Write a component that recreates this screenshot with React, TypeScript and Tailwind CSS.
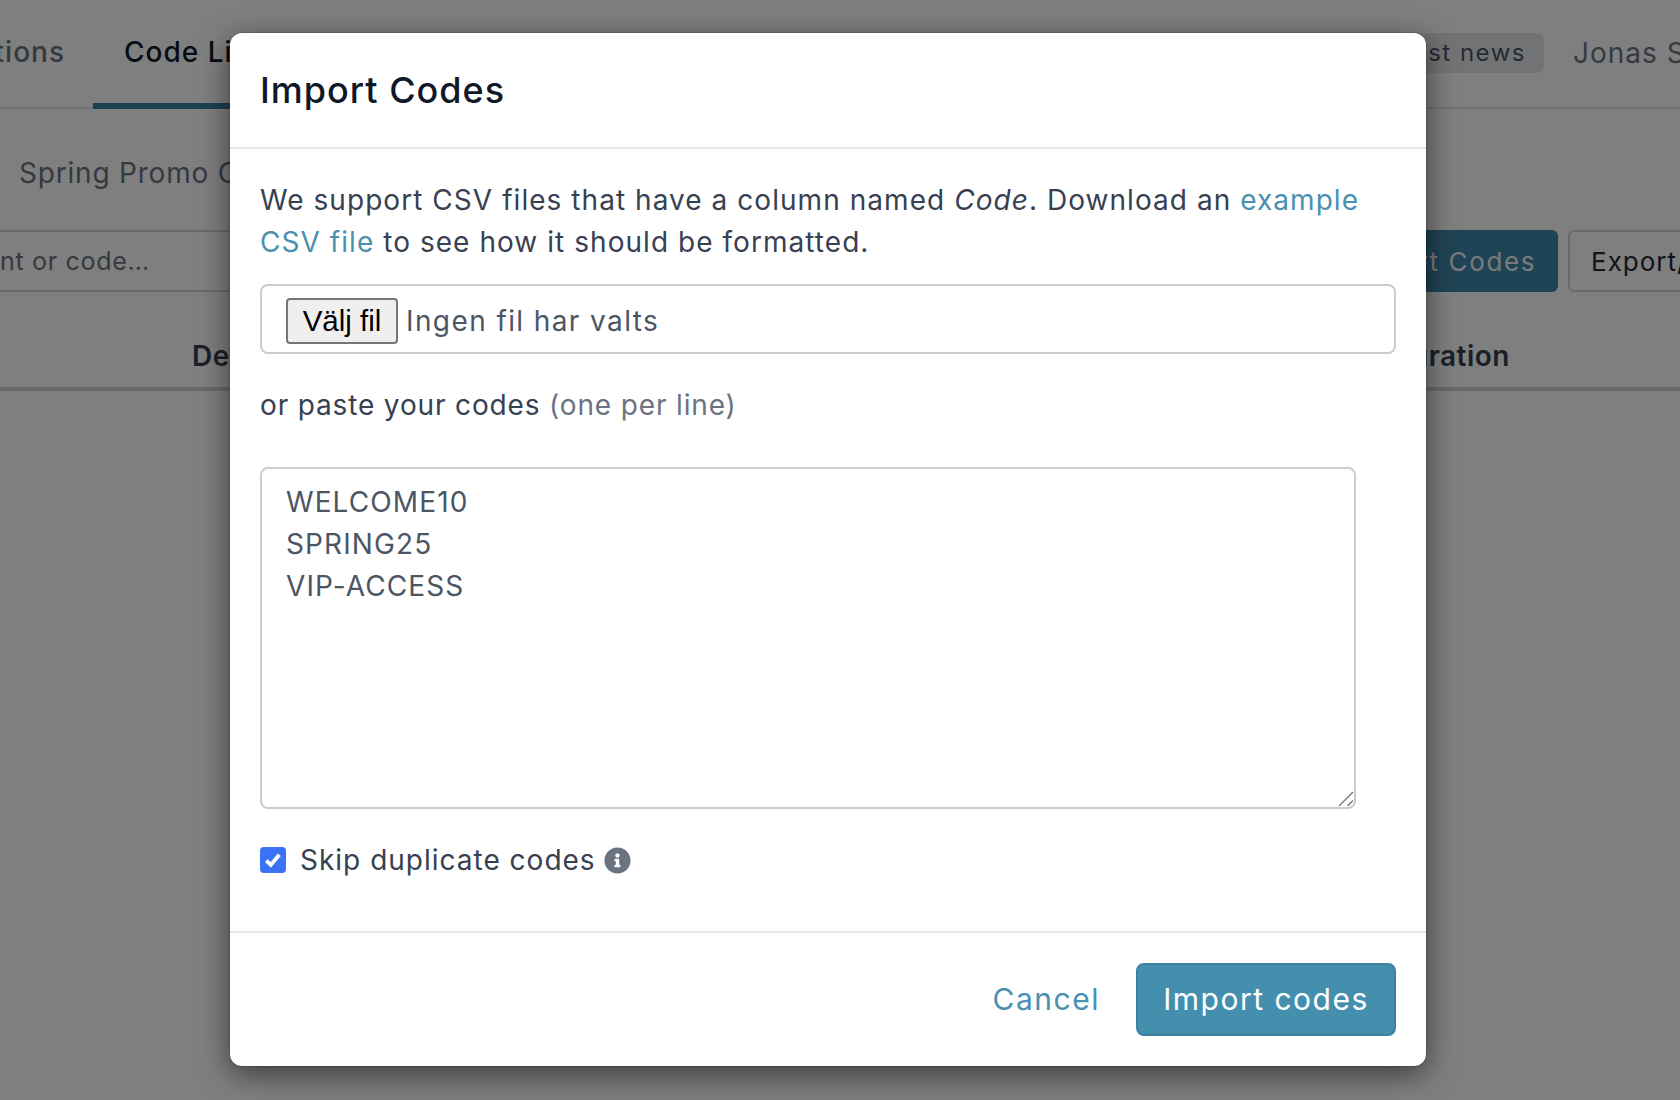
import React from "react";
import { FaInfoCircle } from "react-icons/fa";

function Background() {
  return (
    <div className="h-[1100px] w-[1680px] overflow-hidden bg-white text-[28px] tracking-[1px] text-[#4b5563]">
      <div className="flex h-[109px] items-start justify-between border-b-2 border-[#e5e7eb] pt-[32px]">
        <div className="flex">
          <div className="ml-[-60px] w-[153px] whitespace-nowrap pr-[28px] text-right leading-[40px] font-medium text-[#6b7280]">Actions</div>
          <div className="h-[77px] w-[320px] border-b-[6px] border-[#3b82a0] pl-[31px] leading-[40px] font-medium text-[#111827]">Code Lists</div>
        </div>
        <div className="flex items-center">
          <div className="mr-[29px] flex h-[40px] w-[170px] items-center justify-end whitespace-nowrap rounded-[8px] bg-[#e5e7eb] pr-[18px] text-[24px] tracking-[1.5px]">Latest news</div>
          <div className="w-[107px] whitespace-nowrap text-[#6b7280]">Jonas Svensson</div>
        </div>
      </div>
      <div className="pl-[19px] pt-[43px] leading-[42px] tracking-[0.8px] text-[#6b7280]">Spring Promo Codes</div>
      <div className="mt-[36px] flex items-center justify-between">
        <div className="flex h-[62px] w-[400px] items-center border-y-2 border-[#d1d5db] pt-[2px] text-[25px] tracking-[0.7px] text-[#6b7280]">nt or code…</div>
        <div className="flex items-center gap-[10px]">
          <div className="flex h-[62px] w-[260px] items-center justify-end whitespace-nowrap rounded-[6px] bg-[#3f88ab] pr-[22px] text-[26px] tracking-[1.6px] text-[#f3f4f6]">Import Codes</div>
          <div className="flex h-[62px] w-[112px] items-center overflow-hidden whitespace-nowrap rounded-l-[6px] border-2 border-r-0 border-[#d1d5db] pl-[21px] text-[26px] text-[#1f2937]">Export/</div>
        </div>
      </div>
      <div className="mt-[40px] flex h-[59px] justify-between border-b-[4px] border-[#d1d5db] pl-[192px] pr-[170px] pt-[3px] font-semibold tracking-[0.5px] text-[#374151]">
        <span>Description</span>
        <span>Duration</span>
      </div>
    </div>
  );
}

export default function App() {
  return (
    <div className="relative h-[1100px] w-[1680px] overflow-hidden font-['Inter','Liberation_Sans',sans-serif]">
      <Background />
      <div className="absolute inset-0 bg-black/50 pl-[230px] pt-[33px]">
        <div className="h-[1033px] w-[1196px] overflow-hidden rounded-[12px] bg-white shadow-[0_0_0_1px_rgba(0,0,0,0.12),0_8px_30px_rgba(0,0,0,0.55)]">
          <div className="flex h-[116px] items-center border-b-2 border-[#e5e7eb] px-[30px] text-[36px] font-medium tracking-[1px] text-[#111827]">
            Import Codes
          </div>
          <div className="h-[782px] px-[30px] pt-[30px] text-[28px] leading-[42px] tracking-[1px] text-[#374151]">
            <p className="tracking-[1.05px]">
              We support CSV files that have a column named <em>Code</em>. Download an{" "}
              <a className="text-[#4a90b0]">example CSV file</a> to see how it should be formatted.
            </p>
            <div className="mt-[21px] flex h-[70px] w-[1136px] items-center rounded-[8px] border-2 border-[#cccccc] pl-[24px] pt-[4px] tracking-[1.4px] text-[#4b5563]">
              <button className="h-[46px] w-[112px] rounded-[4px] border-2 border-[#767676] bg-[#efefef] font-['Liberation_Sans',sans-serif] text-[29.5px] leading-none tracking-normal text-black">
                Välj fil
              </button>
              <span className="ml-[8px]">Ingen fil har valts</span>
            </div>
            <p className="mt-[30px] tracking-[0.85px]">
              or paste your codes <span className="text-[#6b7280]">(one per line)</span>
            </p>
            <div className="relative mt-[41px] w-[1096px]">
              <textarea
                readOnly
                className="block h-[342px] w-[1096px] resize-none rounded-[8px] border-2 border-[#cccccc] px-[24px] py-[12px] text-[28px] leading-[42px] tracking-[1.1px] text-[#4b5563] outline-none"
                defaultValue={"WELCOME10\nSPRING25\nVIP-ACCESS"}
              />
              <svg viewBox="0 0 16 16" className="absolute bottom-[2px] right-[2px] h-[16px] w-[16px]" fill="none" stroke="#777777" strokeWidth="1.4">
                <path d="M1 15 15 1M9.5 15 15 9.5" />
              </svg>
            </div>
            <div className="mt-[30px] flex items-center">
              <span className="flex h-[26px] w-[26px] items-center justify-center rounded-[4px] bg-[#3b72f6]">
                <svg viewBox="0 0 16 16" className="h-[22px] w-[22px]" fill="none" stroke="white" strokeWidth="2.8">
                  <path d="M3.2 8.4 6.4 11.6 12.6 4.2" />
                </svg>
              </span>
              <span className="ml-[14px]">Skip duplicate codes</span>
              <FaInfoCircle className="ml-[8px] text-[27px] text-[#6b7280]" />
            </div>
          </div>
          <div className="flex h-[135px] items-center justify-end border-t-2 border-[#e5e7eb] px-[30px] text-[30px] tracking-[1.5px]">
            <a className="mr-[36px] text-[#4a90b0]">Cancel</a>
            <button className="h-[73px] w-[260px] rounded-[8px] border-2 border-[#3b82a0] bg-[#448fae] text-white">Import codes</button>
          </div>
        </div>
      </div>
    </div>
  );
}
